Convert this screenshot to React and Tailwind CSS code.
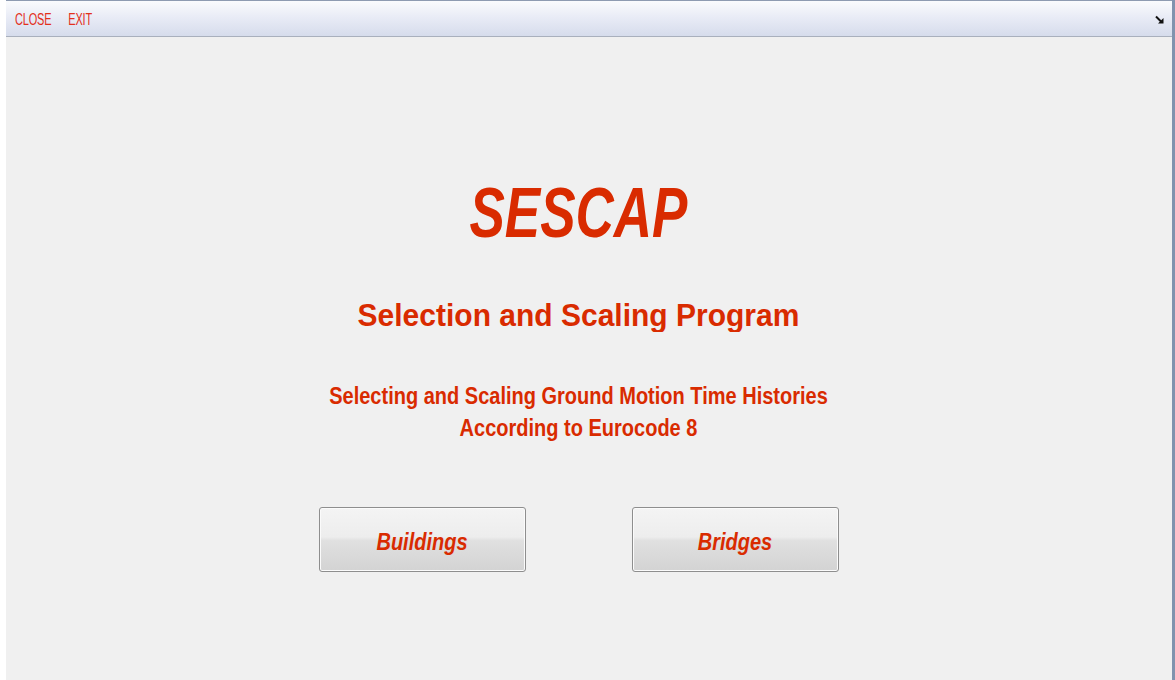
import React from 'react';

const RED = 'text-[#d92b00]';

// small "restore" arrow at the right end of the menu strip
const CornerArrow = () => (
  <svg width="9" height="9" viewBox="0 0 9 9" className="mr-[8px]">
    <path d="M1 1.5 L6 6.5" stroke="#111" strokeWidth="2" />
    <path d="M8.5 3 L8.5 8.5 L3 8.5 Z" fill="#111" />
  </svg>
);

const MenuItem = ({ children }) => (
  <button className="inline-block origin-center scale-y-[1.45] text-[11px] leading-none text-[#e3301c] tracking-[-0.2px]">
    {children}
  </button>
);

const BigButton = ({ label }) => (
  <button className="w-[207px] h-[65px] pt-[4px] rounded-[3px] border border-[#8e8e8e] bg-[linear-gradient(to_bottom,#f4f4f4_0%,#ededed_46%,#e0e0e0_52%,#d3d3d3_100%)] shadow-[inset_0_0_0_1px_#fbfbfb] flex items-center justify-center">
    <span className={`inline-block scale-y-[1.2] italic font-bold text-[20px] leading-none ${RED}`}>
      {label}
    </span>
  </button>
);

export default function App() {
  return (
    <div
      className="w-[1175px] h-[680px] flex bg-white overflow-hidden"
      style={{ fontFamily: '"Liberation Sans", Arial, sans-serif' }}
    >
      {/* white gutter on the left */}
      <div className="w-[6px] shrink-0 bg-white" />

      <div className="flex-1 flex flex-col">
        {/* menu strip */}
        <div className="h-[37px] shrink-0 border-t border-t-[#8e9bb1] border-b border-b-[#a9b0bd] bg-[linear-gradient(to_bottom,#fafbfd,#e9ecf6_45%,#d6dcec)] flex items-center">
          <div className="flex items-center gap-[17px] pl-[9px] pt-[1px]">
            <MenuItem>CLOSE</MenuItem>
            <MenuItem>EXIT</MenuItem>
          </div>
          <div className="ml-auto pt-[1px]">
            <CornerArrow />
          </div>
        </div>

        {/* main panel */}
        <div className="flex-1 bg-[#f0f0f0] pr-[21px] flex flex-col items-center">
          <h1 className={`mt-[146px] h-[60px] leading-[60px] inline-block scale-y-[1.32] italic font-bold text-[53px] ${RED}`}>
            SESCAP
          </h1>

          <h2 className={`mt-[52px] h-[40px] leading-[40px] inline-block scale-y-[1.06] font-bold text-[30px] ${RED}`}>
            Selection and Scaling Program
          </h2>

          <p className={`mt-[50px] leading-[27px] text-center inline-block scale-y-[1.19] font-bold text-[20px] ${RED}`}>
            Selecting and Scaling Ground Motion Time Histories
            <br />
            According to Eurocode 8
          </p>

          <div className="mt-[68px] flex gap-[106px]">
            <BigButton label="Buildings" />
            <BigButton label="Bridges" />
          </div>
        </div>
      </div>

      {/* window frame on the right */}
      <div className="w-[3px] shrink-0 bg-[#8193ae]" />
    </div>
  );
}
